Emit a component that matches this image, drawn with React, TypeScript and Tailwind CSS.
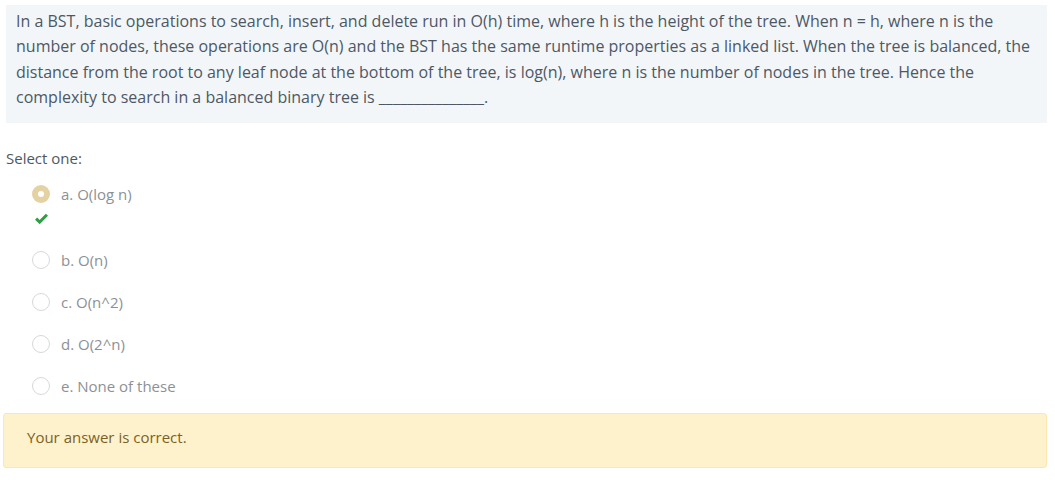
import React from "react";

const options = [
  { label: "a. O(log n)", checked: true },
  { label: "b. O(n)", checked: false },
  { label: "c. O(n^2)", checked: false },
  { label: "d. O(2^n)", checked: false },
  { label: "e. None of these", checked: false },
];

function Radio({ checked }: { checked: boolean }) {
  if (checked) {
    return (
      <span className="w-[18px] h-[18px] rounded-full bg-[#e4d2a3] flex items-center justify-center shrink-0">
        <span className="w-[6px] h-[6px] rounded-full bg-white" />
      </span>
    );
  }
  return <span className="w-[18px] h-[18px] rounded-full border border-[#d6d8da] bg-white shrink-0" />;
}

function Check() {
  return (
    <svg width="13" height="11" viewBox="0 0 12 10">
      <path d="M1 5.2 L4.3 8.3 L11 1.5" fill="none" stroke="#2f9e44" strokeWidth="2.8" />
    </svg>
  );
}

export default function App() {
  return (
    <div className="bg-white w-[1055px] h-[491px] pt-[5px] font-['Open_Sans',sans-serif]">
      <div className="ml-[6px] mr-[8px] bg-[#f2f6f9] pl-[10px] pr-[10px] pt-[4px] pb-[12px] text-[16px] leading-[25.4px] text-[#4e5864] whitespace-nowrap">
        In a BST, basic operations to search, insert, and delete run in O(h) time, where h is the height of the tree. When n = h, where n is the
        <br />
        number of nodes, these operations are O(n) and the BST has the same runtime properties as a linked list. When the tree is balanced, the
        <br />
        distance from the root to any leaf node at the bottom of the tree, is log(n), where n is the number of nodes in the tree. Hence the
        <br />
        complexity to search in a balanced binary tree is _______________.
      </div>

      <div className="ml-[6px] mt-[24px] text-[15px] text-[#4e5864]">Select one:</div>

      <div className="ml-[32px] mt-[13px] flex flex-col">
        {options.map((o, i) => (
          <div key={i} className="flex flex-col">
            <div className="flex items-center gap-[11px] h-[24px]">
              <Radio checked={o.checked} />
              <span className="text-[15px] text-[#8c9196]">{o.label}</span>
            </div>
            {o.checked ? (
              <div className="h-[42px] pl-[3px] pt-[7px]">
                <Check />
              </div>
            ) : i < options.length - 1 ? (
              <div className="h-[18px]" />
            ) : null}
          </div>
        ))}
      </div>

      <div className="ml-[3px] mr-[8px] mt-[15px] h-[55px] bg-[#fef2cd] border border-[#fbe7b2] rounded-[3px] pl-[23px] pt-[12px] text-[15px] leading-[22px] text-[#7c6124]">
        Your answer is correct.
      </div>
    </div>
  );
}
